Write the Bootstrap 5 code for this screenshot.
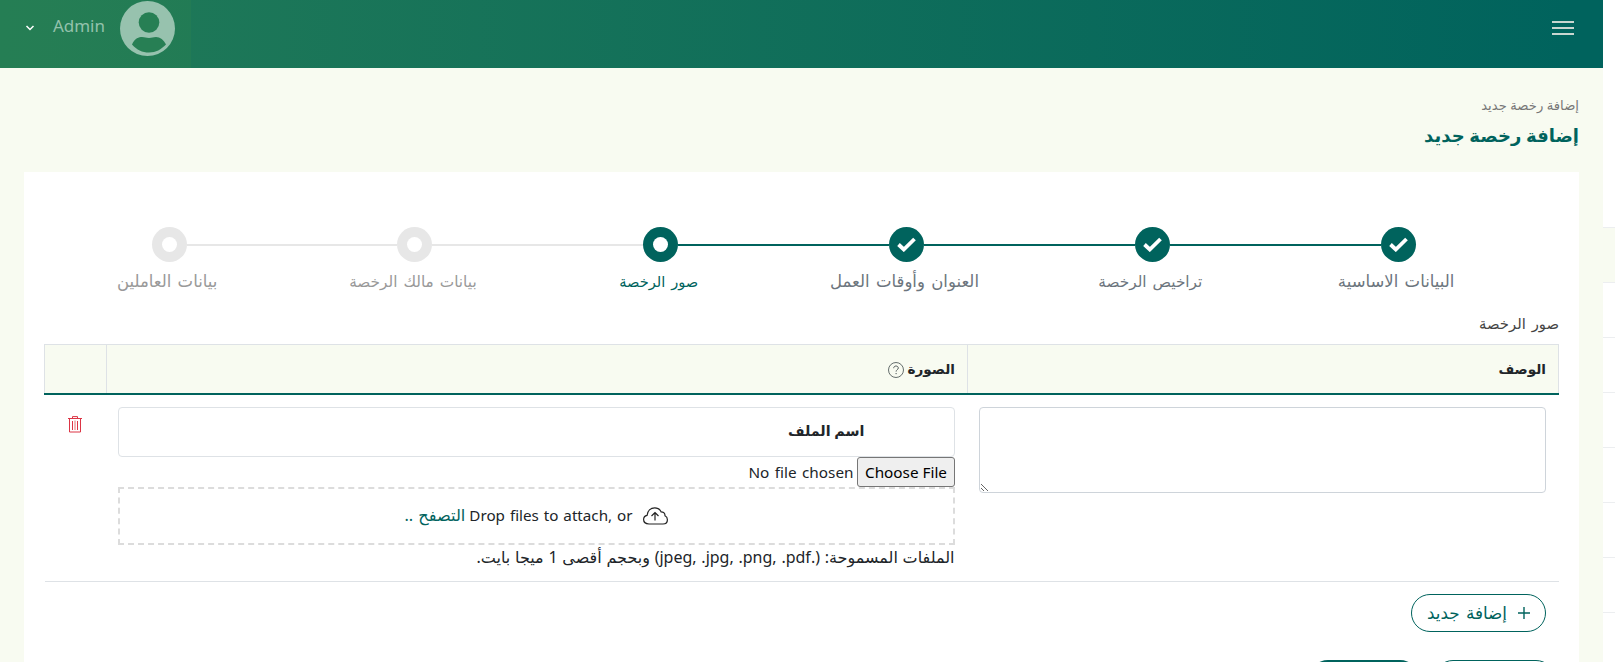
<!DOCTYPE html>
<html lang="ar" dir="rtl">
<head>
<meta charset="utf-8">
<title>إضافة رخصة جديد</title>
<link href="https://cdn.jsdelivr.net/npm/bootstrap@5.3.0/dist/css/bootstrap.min.css" rel="stylesheet">
<style>
:root{--brand:#00635d;--tint:#f8fbf1}
body{font-family:"Noto Sans","DejaVu Sans",sans-serif;font-size:16px;color:#212529;overflow:hidden;height:662px}
.shell{height:662px}
.side-strip{width:12px;padding-top:227px;flex:none}
.side-strip div{height:55px;border-top:1px solid #eceef0}
.side-strip div:first-child{background:var(--tint)}
.main-pane{width:1603px;background:var(--tint);flex:none}
.topbar{height:68px;background:linear-gradient(90deg,#217a57,#00635d 98%)}
.user-box{width:191px;height:68px;background:rgba(50,136,78,.28);padding:1px 16px 0 24px}
.user-name{color:#93c2ac;font-size:17px;line-height:49px;margin-right:15px}
.menu-btn{padding:21px 29px 0 0}
.menu-btn i{display:block;width:22px;height:2px;background:#c9d6d0;margin-bottom:4px}
.heading{height:104px;padding:24px 24px 0}
.crumb{font-size:13.2px;line-height:26px;color:#777}
.page-title{font-size:18px;line-height:34px;font-weight:700;color:var(--brand);margin:0}
.sheet{margin:0 24px;height:490px;background:#fff;padding:55px 20px 0;overflow:hidden}
.steps{padding:0 38px 0 3px;height:84px}
.step-item{width:245.8px;flex:none;color:#6c757d}
.step-dot{width:35px;height:35px;background:var(--brand)}
.step-item.todo .step-dot{background:#e7e7e7}
.rail{height:2px;background:var(--brand)}
.rail.off{background:#e7e7e7}
.step-item.todo{color:#999}
.step-item.now{color:var(--brand)}
.step-text{font-size:16.5px;line-height:38px;white-space:nowrap;word-spacing:2px;padding-left:1px}
.step-text.size-s{font-size:14.6px;padding-right:5px}
.step-text.size-m{font-size:15.3px;padding-right:5px}
.step-text.size-a{padding:0 4px 0 0}
.hole{width:15px;height:15px;background:#fff}
.sec-label{font-size:14.8px;line-height:25px;height:33px;color:#444;word-spacing:2px}
.grid-table{table-layout:fixed;width:1514px;margin:0}
.grid-table th{height:49px;background:var(--tint);border:1px solid #dee2e6;border-bottom:2px solid var(--brand);padding:0 12px;font-size:13.6px;vertical-align:middle}
.grid-table td{padding:12px 13px 12px 11px;border-bottom:1px solid #dee2e6;height:187px}
.note{height:86px;border-color:#ced4da;border-radius:4px;resize:both}
.file-head{height:50px;border:1px solid #dee2e6;border-radius:4px;padding:0 89px 0 0;line-height:46px;font-weight:700;font-size:14.3px}
.pick{height:30px;width:100%;font-size:15.3px;line-height:28px;display:block;word-spacing:1.500px}
.pick::file-selector-button{font:inherit;height:30px;line-height:26px;padding:0 6.5px;border:1px solid #767676;border-radius:3px;background:#efefef;color:#000;margin-left:4px}
.drop{height:58px;border:2px dashed #dcdcdc;font-size:15.2px;word-spacing:1px}
.browse{font-size:16.2px;color:var(--brand)}
.drop-text{margin-right:10px}
.hint{font-size:16px;line-height:24px;white-space:nowrap;word-spacing:.6px}
.add-btn{height:38px;width:135px;border:1px solid var(--brand);color:var(--brand);font-size:16.8px;margin:12px 13px 0 0;word-spacing:2px}
.add-btn span{margin-right:11px;line-height:34px}
.foot-a{width:121px;height:38px;border:1px solid var(--brand)}
.foot-b{width:110px;height:38px;background:var(--brand);margin-right:15px}
</style>
<script src="https://cdn.jsdelivr.net/npm/bootstrap@5.3.0/dist/js/bootstrap.bundle.min.js"></script>
</head>
<body class="bg-white">
<div class="shell d-flex">
<aside class="side-strip"><div></div><div></div><div></div><div></div><div></div><div></div><div></div><div></div></aside>
<div class="main-pane">
<header class="topbar d-flex justify-content-between">
<div class="menu-btn"><i></i><i></i><i></i></div>
<div class="user-box d-flex align-items-start">
<svg width="55" height="55" viewBox="0 0 55 55"><circle cx="27.500" cy="27.500" r="27.500" fill="#97c2ae"/><circle cx="29" cy="21.500" r="10.300" fill="#277f54"/><path d="M12 43.500C15 37 19 36 22 36c3 0 4 1 7 1s4-1 7-1c4 0 8 3 10 7.500-5 5-10 8-17 8S17 49 12 43.500Z" fill="#277f54"/></svg>
<span class="user-name">Admin</span>
<svg class="me-auto" width="12" height="55" viewBox="0 0 12 55"><path d="m2.500 25 3.500 3.500L9.500 25" fill="none" stroke="#fff" stroke-width="1.500"/></svg>
</div>
</header>
<div class="heading"><div class="crumb">إضافة رخصة جديد</div><h1 class="page-title">إضافة رخصة جديد</h1></div>
<main class="sheet">
<div class="steps d-flex">
<div class="step-item"><div class="d-flex align-items-center"><div class="flex-fill"></div><div class="step-dot rounded-circle d-flex align-items-center justify-content-center"><svg width="19" height="15" viewBox="0 0 19 15"><path d="m1.500 7.500 5.300 5L17.500 2" fill="none" stroke="#fff" stroke-width="3.800"/></svg></div><div class="rail flex-fill"></div></div><div class="step-text size-a text-center">البيانات الاساسية</div></div>
<div class="step-item"><div class="d-flex align-items-center"><div class="rail flex-fill"></div><div class="step-dot rounded-circle d-flex align-items-center justify-content-center"><svg width="19" height="15" viewBox="0 0 19 15"><path d="m1.500 7.500 5.300 5L17.500 2" fill="none" stroke="#fff" stroke-width="3.800"/></svg></div><div class="rail flex-fill"></div></div><div class="step-text size-m text-center">تراخيص الرخصة</div></div>
<div class="step-item"><div class="d-flex align-items-center"><div class="rail flex-fill"></div><div class="step-dot rounded-circle d-flex align-items-center justify-content-center"><svg width="19" height="15" viewBox="0 0 19 15"><path d="m1.500 7.500 5.300 5L17.500 2" fill="none" stroke="#fff" stroke-width="3.800"/></svg></div><div class="rail flex-fill"></div></div><div class="step-text size-a text-center">العنوان وأوقات العمل</div></div>
<div class="step-item now"><div class="d-flex align-items-center"><div class="rail flex-fill"></div><div class="step-dot rounded-circle d-flex align-items-center justify-content-center"><div class="hole rounded-circle"></div></div><div class="rail off flex-fill"></div></div><div class="step-text size-s text-center">صور الرخصة</div></div>
<div class="step-item todo"><div class="d-flex align-items-center"><div class="rail off flex-fill"></div><div class="step-dot rounded-circle d-flex align-items-center justify-content-center"><div class="hole rounded-circle"></div></div><div class="rail off flex-fill"></div></div><div class="step-text size-m text-center">بيانات مالك الرخصة</div></div>
<div class="step-item todo"><div class="d-flex align-items-center"><div class="rail off flex-fill"></div><div class="step-dot rounded-circle d-flex align-items-center justify-content-center"><div class="hole rounded-circle"></div></div><div class="flex-fill"></div></div><div class="step-text size-a text-center">بيانات العاملين</div></div>
</div>
<div class="sec-label">صور الرخصة</div>
<table class="grid-table">
<colgroup><col style="width:591px"><col style="width:861px"><col style="width:62px"></colgroup>
<thead><tr><th>الوصف</th><th><span>الصورة</span> <svg width="16" height="16" viewBox="0 0 16 16"><circle cx="8" cy="8" r="7.500" fill="none" stroke="#555d5d" stroke-width=".9"/><path d="M5.700 6.200C5.700 4.800 6.700 4 8 4s2.300.8 2.300 2c0 1.700-2.200 1.700-2.200 3.600" fill="none" stroke="#555d5d"/><circle cx="8.100" cy="11.600" r=".7" fill="#555d5d"/></svg></th><th></th></tr></thead>
<tbody><tr class="align-top">
<td><textarea class="form-control note"></textarea></td>
<td><div class="file-head">اسم الملف</div><input type="file" class="pick">
<div class="drop d-flex align-items-center justify-content-center"><svg width="25" height="18" viewBox="0 0 25 18"><path d="M6 17C3 17 .6 15.300.6 12.500c0-2.200 1.400-3.800 3.500-4.200C4.500 4 7.500.8 11.800.8c3 0 5.200 1.500 6.300 4 2.500 0 4 1.700 3.900 4 1.500.7 2.400 2 2.400 3.900 0 2.600-1.800 4.300-4.400 4.300ZM12 13.500V6M8.500 9 12 5.500 15.500 9" fill="none" stroke="#222" stroke-width="1.200"/></svg><span dir="ltr" class="drop-text">Drop files to attach, or</span><span class="browse me-1">التصفح ..</span></div>
<div class="hint">الملفات المسموحة: (.jpeg, .jpg, .png, .pdf) وبحجم أقصى 1 ميجا بايت.</div></td>
<td class="text-center"><svg class="mt-2" width="14" height="17" viewBox="0 0 14 17"><path d="M0 2.500h14M1.500 2.500v13.500h11V2.500M4.500 2V.6h5V2M4.500 5v9M9.500 5v9" fill="none" stroke="#dc3545"/><path d="M7 4.500v9.500" stroke="#efa0a0" stroke-width="1.500"/></svg></td>
</tr></tbody></table>
<button class="add-btn rounded-pill bg-white p-0 d-flex align-items-center justify-content-center"><svg width="12" height="12" viewBox="0 0 12 12"><path d="M6 0v12M0 6h12" stroke="#00635d" stroke-width="1.400"/></svg><span>إضافة جديد</span></button>
<div class="d-flex mt-4 pt-1"><div class="foot-a rounded-pill me-1"></div><div class="foot-b rounded-pill"></div></div>
</main>
</div>
</div>
</body>
</html>
